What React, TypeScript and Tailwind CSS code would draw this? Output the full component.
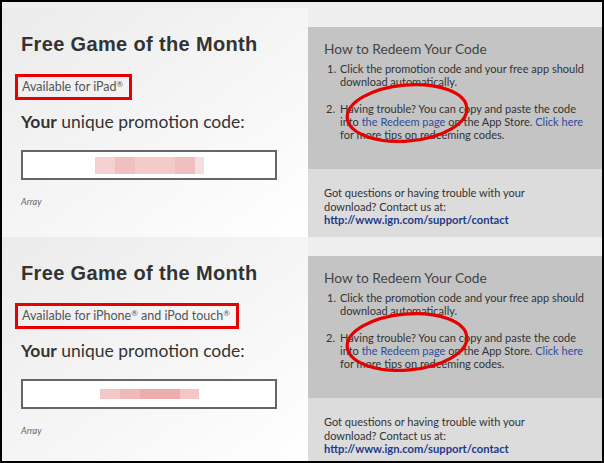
const body = { fontFamily: 'Lato, "Liberation Sans", sans-serif' }
const head = { fontFamily: '"Liberation Sans", Arial, sans-serif' }

type Seg = { w: number; c: string }

function Card({ device, segs, segH, segLeft }: { device: React.ReactNode; segs: Seg[]; segH: string; segLeft: string }) {
  return (
    <div className="relative flex h-[229px] shrink-0">
      <div className="w-[306px] bg-gradient-to-br from-[#ebebeb] to-[#ffffff] pl-[19px] pt-[24px]">
        <h1 style={head} className="text-[20px] font-bold leading-[24px] tracking-[0.35px] text-[#333]">
          Free Game of the Month
        </h1>
        <div className="mt-[18px] -ml-[6px] inline-block border-[3px] border-[#e60000] py-[2px] pl-[4px] pr-[6px]">
          <p style={body} className="text-[12.5px] leading-[16px] text-[#555]">
            {device}
          </p>
        </div>
        <p style={body} className="mt-[10px] text-[17.5px] leading-[24px] text-[#333]">
          <span className="font-bold">Your</span> unique promotion code:
        </p>
        <div className="mt-[16px] flex h-[30px] w-[256px] items-center border-2 border-[#666] bg-white">
          <div className={`flex ${segH} ${segLeft}`}>
            {segs.map((s, i) => (
              <div key={i} style={{ width: s.w, background: s.c }} />
            ))}
          </div>
        </div>
        <p style={body} className="mt-[16px] text-[9px] italic leading-[12px] text-[#666]">
          Array
        </p>
      </div>
      <div className="flex flex-1 flex-col bg-[#eeeeee] pt-[19px]">
        <div style={body} className="h-[142px] whitespace-nowrap bg-[#c4c4c4] pl-[16px] pt-[13px] text-[#333]">
          <h2 className="text-[13.75px] leading-[18px] text-[#444]">How to Redeem Your Code</h2>
          <ol className="mt-[4px] text-[11px] leading-[13px]">
            <li className="flex">
              <span className="w-[16px] shrink-0 pl-[3px]">1.</span>
              <span>
                Click the promotion code and your free app should
                <br />
                download automatically.
              </span>
            </li>
            <li className="mt-[14px] flex">
              <span className="w-[16px] shrink-0 pl-[2px]">2.</span>
              <span>
                Having trouble? You can copy and paste the code
                <br />
                into <span className="text-[#2d4c9e]">the Redeem page</span> on the App Store.{' '}
                <span className="text-[#2d4c9e]">Click here</span>
                <br />
                for more tips on redeeming codes.
              </span>
            </li>
          </ol>
        </div>
        <div
          style={body}
          className="flex-1 whitespace-nowrap bg-[#dcdcdc] pl-[16px] pt-[17px] text-[11px] leading-[13.5px] text-[#333]"
        >
          <p>
            Got questions or having trouble with your
            <br />
            download? Contact us at:
          </p>
          <p className="text-[11.2px] font-bold text-[#1d3a8a]">http://www.ign.com/support/contact</p>
        </div>
      </div>
      <svg
        className="absolute left-[341px] top-[73px] h-[64px] w-[128px] -rotate-[5deg]"
        viewBox="0 0 128 64"
        fill="none"
      >
        <ellipse cx="64" cy="32" rx="60" ry="28" stroke="#e60000" strokeWidth="3.2" />
      </svg>
    </div>
  )
}

const R = <sup className="text-[8px]">®</sup>

export default function App() {
  return (
    <div className="h-[463px] w-[604px] overflow-hidden border-2 border-black bg-[#eeeeee]">
      <div className="h-[6px]" />
      <Card
        device={<>Available for iPad{R}</>}
        segH="h-[17px]"
        segLeft="ml-[72px]"
        segs={[
          { w: 20, c: '#f5d0d0' },
          { w: 20, c: '#f0bfbf' },
          { w: 40, c: '#f4caca' },
          { w: 20, c: '#f0c0c0' },
          { w: 9, c: '#f7dede' },
        ]}
      />
      <Card
        device={<>Available for iPhone{R} and iPod touch{R}</>}
        segH="h-[10px]"
        segLeft="ml-[77px]"
        segs={[
          { w: 20, c: '#f4c8c8' },
          { w: 20, c: '#f0b9b9' },
          { w: 40, c: '#eeadad' },
          { w: 19, c: '#f4c6c6' },
        ]}
      />
    </div>
  )
}
